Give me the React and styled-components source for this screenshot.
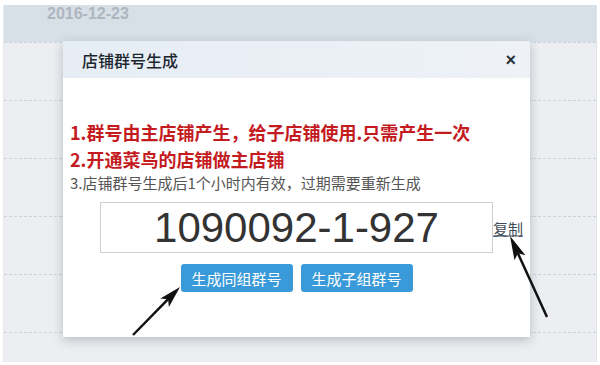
import React from "react";
import styled, { createGlobalStyle } from "styled-components";

const GlobalStyle = createGlobalStyle`
  html, body {
    margin: 0;
    padding: 0;
    background: #fff;
  }
  body {
    font-family: "Noto Sans", "Noto Sans CJK SC", sans-serif;
  }
`;

const Page = styled.div`
  position: relative;
  width: 600px;
  height: 365px;
  padding: 5px 3px 3px 3px;
  box-sizing: border-box;
  overflow: hidden;
`;

const Panel = styled.div`
  height: 100%;
  background: #eceef1;
  border-right: 1px solid #dfe2e6;
  border-left: 1px solid #e6e8eb;
  box-sizing: border-box;
`;

const TopBand = styled.div`
  height: 37px;
  background: #d7dfe7;
  padding-left: 43px;
  font-family: "Liberation Sans", Arial, sans-serif;
  font-weight: bold;
  font-size: 16px;
  line-height: 17px;
  color: #aeb6bf;
`;

const Row = styled.div`
  height: 57px;
  border-top: 1px dashed #cdd2d8;
`;

// 弹窗
const Modal = styled.div`
  position: absolute;
  left: 63px;
  top: 41px;
  width: 467px;
  background: #fff;
  box-shadow: 0 3px 10px rgba(60, 70, 80, 0.3);
`;

const ModalHeader = styled.div`
  height: 37px;
  display: flex;
  align-items: center;
  justify-content: space-between;
  padding: 0 14px 0 19px;
  background: linear-gradient(90deg, #e6edf4, #eef2f7);
`;

const ModalTitle = styled.div`
  font-family: "Noto Sans CJK SC", sans-serif;
  font-size: 16px;
  font-weight: 500;
  color: #1d2730;
`;

const Close = styled.span`
  font-family: "Liberation Sans", Arial, sans-serif;
  font-size: 18px;
  font-weight: bold;
  color: #2a323a;
  line-height: 1;
`;

const ModalBody = styled.div`
  padding: 41px 7px 45px;
`;

const Notice = styled.div`
  font-family: "Noto Sans CJK SC", sans-serif;
  font-size: ${({ $strong }) => ($strong ? "18px" : "15px")};
  font-weight: ${({ $strong }) => ($strong ? "bold" : "normal")};
  line-height: ${({ $strong }) => ($strong ? "27px" : "20px")};
  color: ${({ $strong }) => ($strong ? "#c41b1f" : "#555")};
  white-space: nowrap;
`;

const CodeRow = styled.div`
  display: flex;
  justify-content: center;
  margin-top: 9px;
`;

const CodeBox = styled.div`
  position: relative;
  width: 393px;
  height: 51px;
  box-sizing: border-box;
  border: 1px solid #cfcfcf;
  display: flex;
  align-items: center;
  justify-content: center;
  font-family: "Liberation Sans", Arial, sans-serif;
  font-size: 42px;
  color: #333;
`;

const CopyLink = styled.a`
  position: absolute;
  left: 100%;
  top: 50%;
  transform: translateY(-50%);
  margin-left: 1px;
  font-family: "Noto Sans CJK SC", sans-serif;
  font-size: 15px;
  color: #3f4b58;
  text-decoration: underline;
  white-space: nowrap;
`;

const ButtonRow = styled.div`
  display: flex;
  justify-content: center;
  gap: 8px;
  margin-top: 11px;
`;

const Button = styled.button`
  width: 112px;
  height: 28px;
  border: none;
  border-radius: 3px;
  background: #3a9ad9;
  color: #fff;
  font-family: "Noto Sans CJK SC", sans-serif;
  font-size: 15px;
  padding: 0;
  cursor: pointer;
`;

const Arrows = styled.svg`
  position: absolute;
  left: 0;
  top: 0;
  pointer-events: none;
`;

function Arrow({ from, to, len = 22, half = 6 }) {
  const dx = to[0] - from[0];
  const dy = to[1] - from[1];
  const d = Math.hypot(dx, dy);
  const ux = dx / d;
  const uy = dy / d;
  const bx = to[0] - ux * len;
  const by = to[1] - uy * len;
  const nx = -uy;
  const ny = ux;
  const notchX = to[0] - ux * (len - 5);
  const notchY = to[1] - uy * (len - 5);
  const pts = [
    [to[0], to[1]],
    [bx + nx * half, by + ny * half],
    [notchX, notchY],
    [bx - nx * half, by - ny * half],
  ]
    .map((p) => p.join(","))
    .join(" ");
  return (
    <g>
      <line x1={from[0]} y1={from[1]} x2={notchX} y2={notchY} stroke="#111" strokeWidth="2.5" />
      <polygon points={pts} fill="#111" />
    </g>
  );
}

export default function App() {
  return (
    <>
      <GlobalStyle />
      <Page>
        <Panel>
          <TopBand>2016-12-23</TopBand>
          <Row />
          <Row />
          <Row />
          <Row />
          <Row />
          <Row />
        </Panel>

        <Modal>
          <ModalHeader>
            <ModalTitle>店铺群号生成</ModalTitle>
            <Close>×</Close>
          </ModalHeader>
          <ModalBody>
            <Notice $strong>1.群号由主店铺产生，给子店铺使用.只需产生一次</Notice>
            <Notice $strong>2.开通菜鸟的店铺做主店铺</Notice>
            <Notice>3.店铺群号生成后1个小时内有效，过期需要重新生成</Notice>
            <CodeRow>
              <CodeBox>
                1090092-1-927
                <CopyLink href="#">复制</CopyLink>
              </CodeBox>
            </CodeRow>
            <ButtonRow>
              <Button>生成同组群号</Button>
              <Button>生成子组群号</Button>
            </ButtonRow>
          </ModalBody>
        </Modal>

        <Arrows width="600" height="365" viewBox="0 0 600 365">
          <Arrow from={[133, 335]} to={[180, 287]} />
          <Arrow from={[547, 317]} to={[510, 236]} len={24} />
        </Arrows>
      </Page>
    </>
  );
}
